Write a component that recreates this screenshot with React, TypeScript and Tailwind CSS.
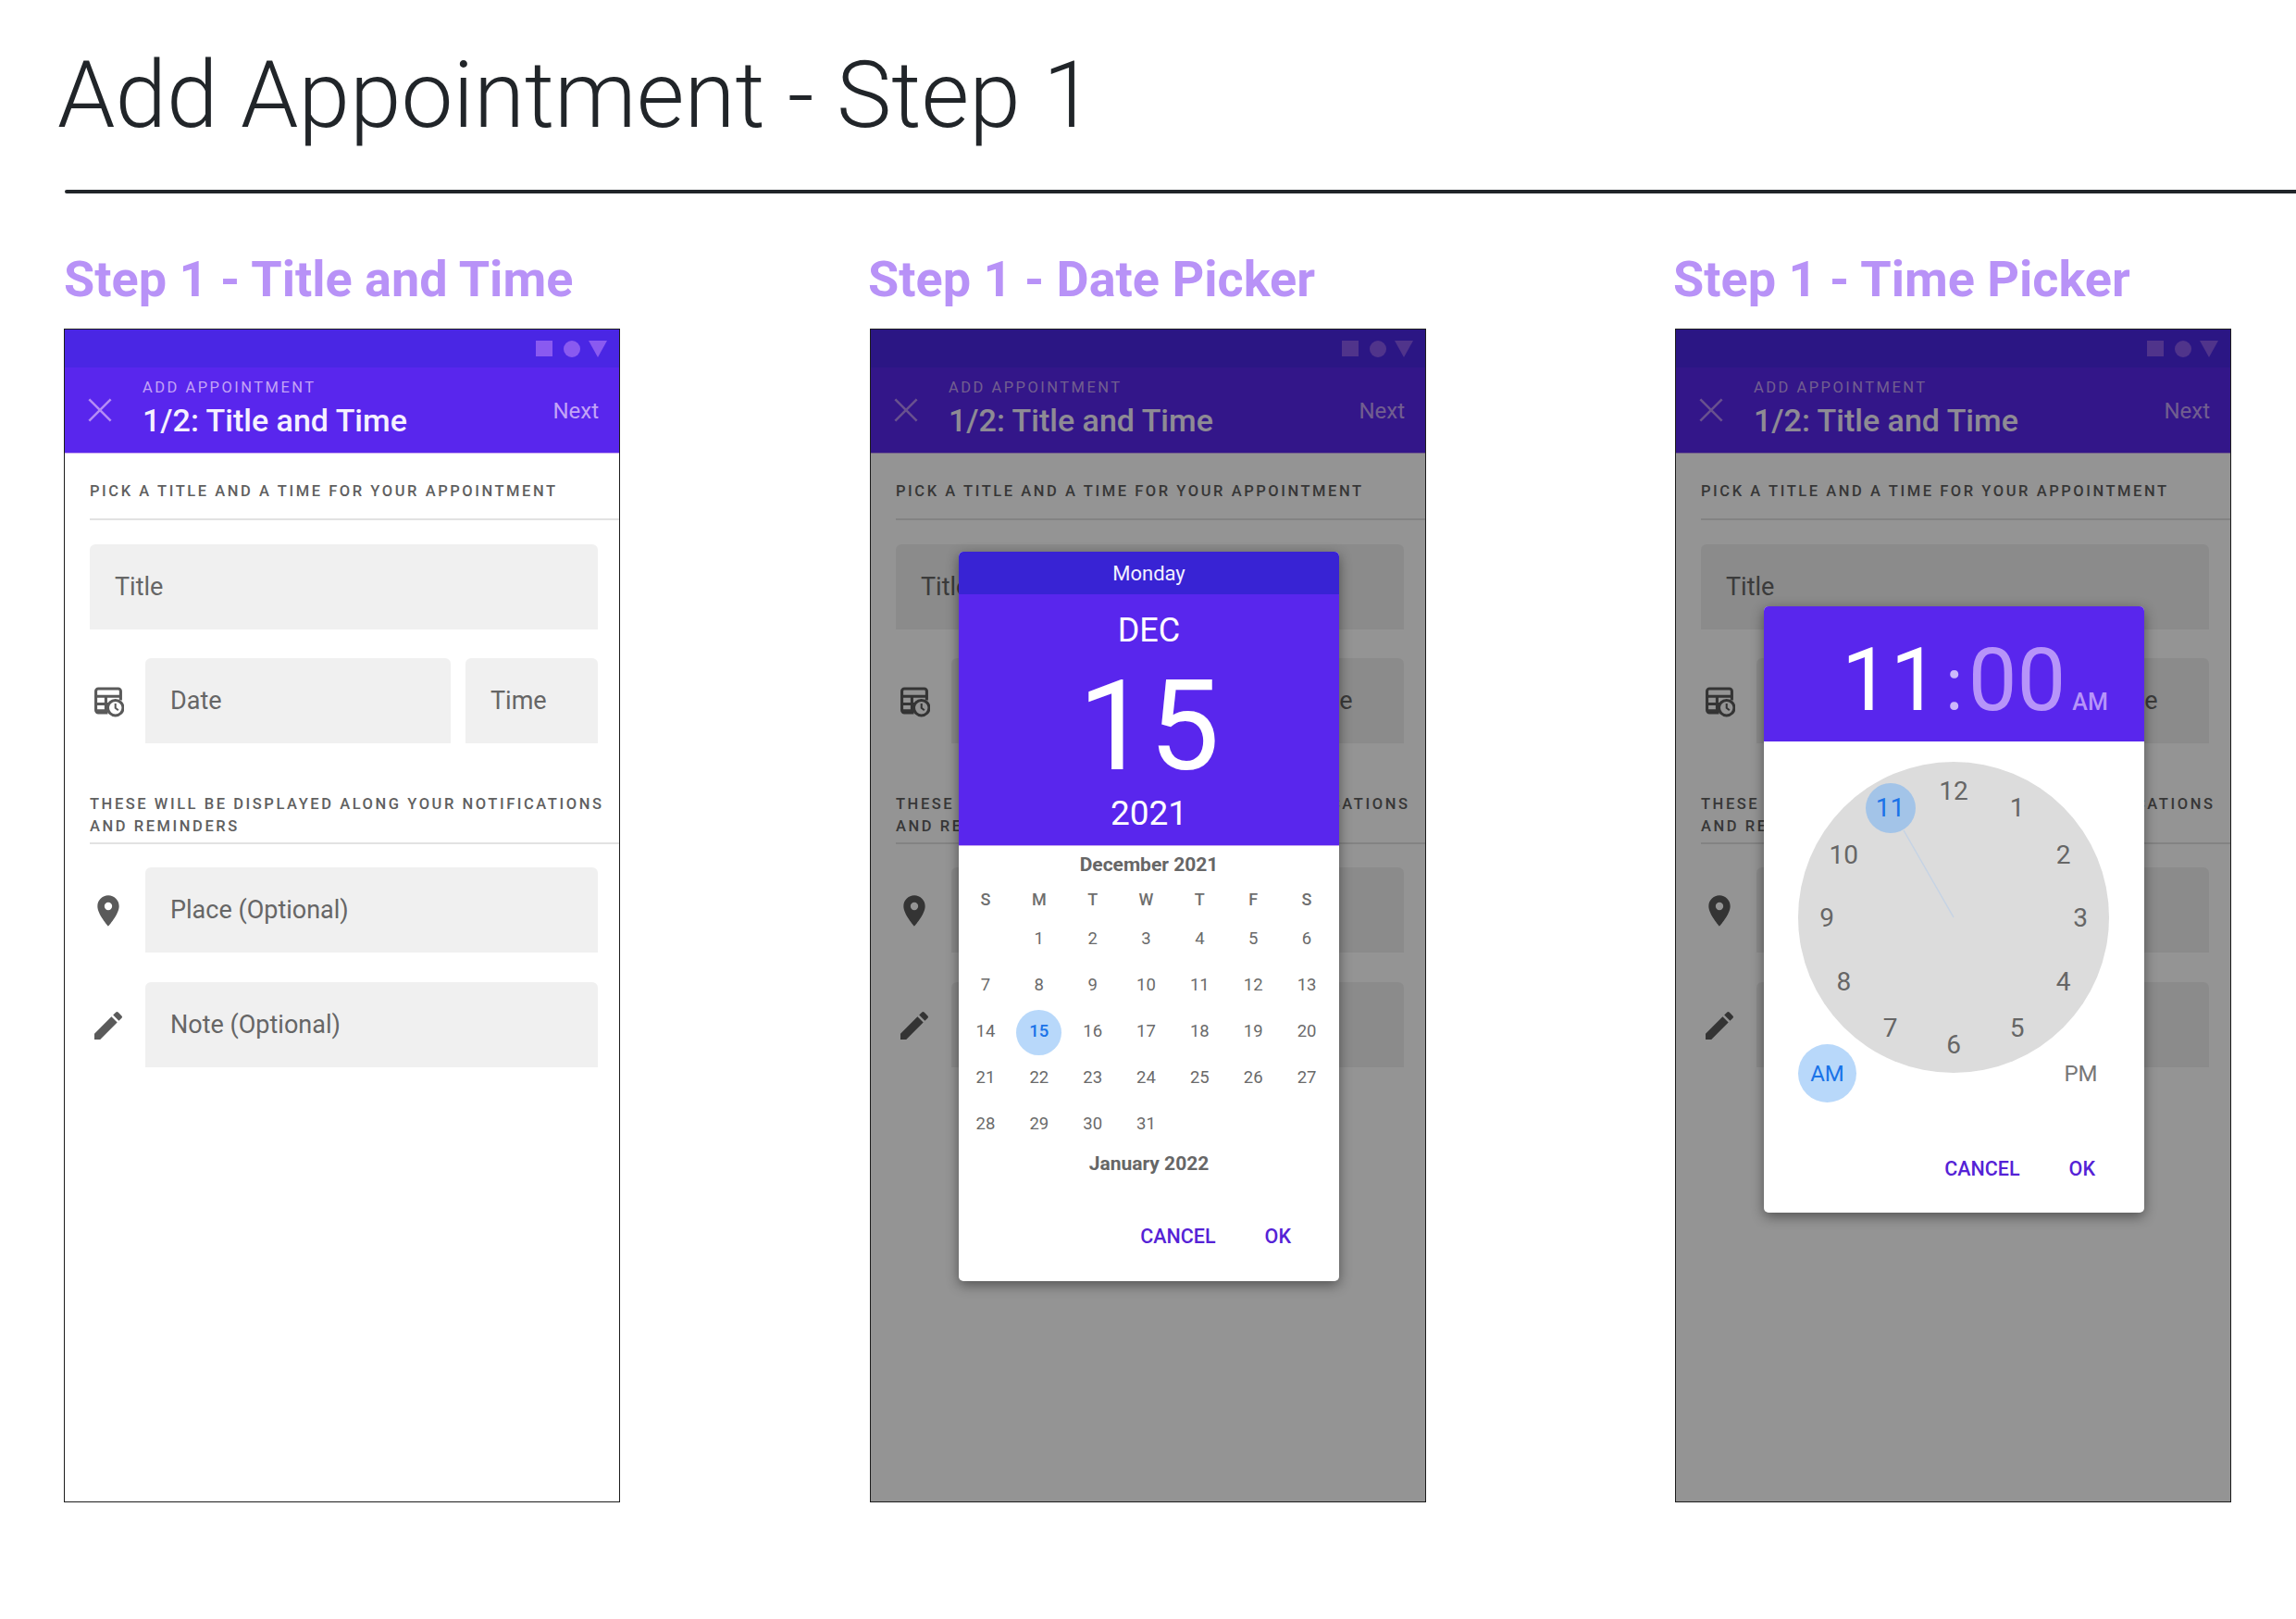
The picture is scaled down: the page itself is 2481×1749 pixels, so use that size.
import type { ReactNode } from "react";
import { MdPlace, MdEdit } from "react-icons/md";

const WEEK = ["S", "M", "T", "W", "T", "F", "S"];
const DAYS = ["", ...Array.from({ length: 31 }, (_, i) => String(i + 1))];

function TableClockIcon() {
  return (
    <svg viewBox="0 0 32 32" className="w-[33px] h-[33px]" fill="none" stroke="#5a5a5a" strokeWidth="3">
      <path d="M15 27H5a2.5 2.5 0 0 1-2.5-2.5V4.5A2.5 2.5 0 0 1 5 2h21a2.5 2.5 0 0 1 2.5 2.5V14" />
      <path d="M2.5 10h26M2.5 18h13M2.5 25h12M13 10v16" />
      <circle cx="23" cy="22" r="8" fill="#fff" />
      <path d="M23 17.5V22l3 2.5" strokeWidth="2" />
    </svg>
  );
}

function Field({ label, className }: { label: string; className: string }) {
  return (
    <div className={`h-[92px] bg-[#f0f0f0] rounded-t-[6px] flex items-center pl-[27px] pt-[1px] text-[27px] text-[#666666] ${className}`}>
      {label}
    </div>
  );
}

function SectionLabel({ children }: { children: ReactNode }) {
  return (
    <div className="text-[16.5px] leading-[24px] font-medium tracking-[0.155em] text-[#606060] uppercase">{children}</div>
  );
}

function Phone({ children }: { children?: ReactNode }) {
  return (
    <div className="relative w-[601px] h-[1268px] border border-[#1c1c1c] bg-white overflow-hidden flex flex-col">
      {/* status bar */}
      <div className="h-[41px] bg-[#4a26e4] flex items-center justify-end pr-[13px] shrink-0">
        <div className="w-[18px] h-[17px] bg-[#8a5af0]" />
        <div className="w-[18px] h-[18px] rounded-full bg-[#8a5af0] ml-[12px]" />
        <svg viewBox="0 0 20 18" className="w-[20px] h-[18px] ml-[9px]">
          <path d="M0 0h20L10 18z" fill="#8a5af0" />
        </svg>
      </div>
      {/* toolbar */}
      <div className="h-[93px] bg-[#5926ed] border-b border-[#c8a8f0] flex shrink-0 relative">
        <div className="w-[84px] pl-[24px] pt-[32px]">
          <svg viewBox="0 0 24 24" className="w-[28px] h-[28px]" stroke="#b48cf5" strokeWidth="2.2">
            <path d="M2 2l20 20M22 2L2 22" />
          </svg>
        </div>
        <div className="flex-1 pt-[12px]">
          <div className="text-[16.5px] leading-[20px] tracking-[0.15em] text-[#c3a3f7]">ADD APPOINTMENT</div>
          <div className="text-[34px] leading-[40px] mt-[5px] font-medium text-[#f5f0ff]">1/2: Title and Time</div>
        </div>
        <div className="pr-[22px] pt-[33px] text-[24px] leading-[28px] text-[#c3a3f7]">Next</div>
      </div>
      {/* form */}
      <div className="pl-[27px] flex flex-col">
        <div className="mt-[29px]">
          <SectionLabel>Pick a title and a time for your appointment</SectionLabel>
        </div>
        <div className="h-[2px] bg-[#e2e2e2] mt-[17px]" />
        <Field label="Title" className="mt-[26px] mr-[23px]" />
        <div className="flex items-center mt-[31px] mr-[23px]">
          <div className="w-[60px] pl-[4px] pt-[2px]">
            <TableClockIcon />
          </div>
          <Field label="Date" className="w-[330px]" />
          <Field label="Time" className="flex-1 ml-[16px]" />
        </div>
        <div className="mt-[54px]">
          <SectionLabel>These will be displayed along your notifications and reminders</SectionLabel>
        </div>
        <div className="h-[2px] bg-[#e2e2e2] mt-[5px]" />
        <div className="flex items-center mt-[25px] mr-[23px]">
          <div className="w-[60px] pt-[2px] text-[#5a5a5a]">
            <MdPlace className="w-[40px] h-[40px]" />
          </div>
          <Field label="Place (Optional)" className="flex-1" />
        </div>
        <div className="flex items-center mt-[32px] mr-[23px]">
          <div className="w-[60px] pt-[2px] text-[#5a5a5a]">
            <MdEdit className="w-[40px] h-[40px]" />
          </div>
          <Field label="Note (Optional)" className="flex-1" />
        </div>
      </div>
      {children}
    </div>
  );
}

function Actions({ className }: { className: string }) {
  return (
    <div className={`flex justify-end gap-[53px] text-[21.5px] leading-[28px] font-medium text-[#5522d6] ${className}`}>
      <span>CANCEL</span>
      <span>OK</span>
    </div>
  );
}

function DatePicker() {
  return (
    <div className="absolute left-[95px] top-[240px] w-[411px] h-[788px] bg-white rounded-[5px] overflow-hidden shadow-[0_4px_14px_rgba(0,0,0,0.45)]">
      <div className="h-[46px] bg-[#3823d4] flex items-center justify-center text-[22px] text-[#f2f0ff]">Monday</div>
      <div className="h-[272px] bg-[#5926ed] border-b border-[#c8a8f0] flex flex-col items-center text-white">
        <div className="mt-[17px] text-[36px] leading-[44px]">DEC</div>
        <div className="mt-[27px] text-[136px] leading-[110px]">15</div>
        <div className="mt-[17px] text-[37px] leading-[44px]">2021</div>
      </div>
      <div className="pt-[6px] text-center text-[21px] leading-[28px] font-bold text-[#666666]">December 2021</div>
      <div className="grid grid-cols-7 pr-[6px] mt-[8px] text-[18px] font-medium text-[#6e6e6e]">
        {WEEK.map((d, i) => (
          <div key={i} className="h-[30px] flex items-center justify-center">
            {d}
          </div>
        ))}
      </div>
      <div className="grid grid-cols-7 pr-[6px] mt-[4px] text-[18.5px] text-[#6a6a6a]">
        {DAYS.map((d, i) => (
          <div key={i} className="h-[50px] flex items-center justify-center">
            {d === "15" ? (
              <span className="w-[49px] h-[49px] rounded-full bg-[#b8d8fa] text-[#1a73e8] font-medium flex items-center justify-center">
                {d}
              </span>
            ) : (
              d
            )}
          </div>
        ))}
      </div>
      <div className="mt-[3px] text-center text-[21px] leading-[28px] font-bold text-[#666666]">January 2022</div>
      <Actions className="mt-[51px] pr-[52px]" />
    </div>
  );
}

function TimePicker() {
  const hours = [12, 1, 2, 3, 4, 5, 6, 7, 8, 9, 10, 11];
  return (
    <div className="absolute left-[95px] top-[299px] w-[411px] h-[655px] bg-white rounded-[5px] overflow-hidden shadow-[0_4px_14px_rgba(0,0,0,0.45)]">
      <div className="h-[146px] bg-[#5926ed] flex items-baseline pl-[84px] pt-[25px] text-[94px] leading-[110px] text-white">
        <span>11</span>
        <span className="w-[32px] text-center text-[80px] text-[#cdb8fb]">:</span>
        <span className="text-[#b794f9] -ml-[1px]">00</span>
        <span className="ml-[7px] text-[25px] leading-[28px] font-medium text-[#b794f9]">AM</span>
      </div>
      <div className="relative w-[336px] h-[336px] rounded-full bg-[#dcdcdc] mt-[22px] ml-[37px]">
        <svg viewBox="0 0 336 336" className="absolute inset-0 w-[336px] h-[336px]">
          <line x1="168" y1="168" x2="114" y2="74" stroke="#c5d3e5" strokeWidth="1.5" />
        </svg>
        {hours.map((h, i) => {
          const a = (i * Math.PI) / 6;
          const left = 168 + 137 * Math.sin(a);
          const top = 169 - 137 * Math.cos(a);
          return (
            <span
              key={h}
              style={{ left, top }}
              className={`absolute w-[54px] h-[54px] -ml-[27px] -mt-[27px] rounded-full flex items-center justify-center text-[28px] ${
                h === 11 ? "bg-[#a3c4e8] text-[#1a73e8]" : "text-[#666666]"
              }`}
            >
              {h}
            </span>
          );
        })}
      </div>
      <div className="-mt-[31px] px-[37px] flex justify-between relative text-[24px]">
        <span className="w-[63px] h-[63px] rounded-full bg-[#b8d8fa] text-[#1a73e8] flex items-center justify-center">AM</span>
        <span className="w-[63px] h-[63px] text-[#777777] flex items-center justify-center">PM</span>
      </div>
      <Actions className="mt-[58px] pr-[53px]" />
    </div>
  );
}

function Column({
  title,
  widthClass,
  headingClass,
  children,
}: {
  title: string;
  widthClass: string;
  headingClass: string;
  children?: ReactNode;
}) {
  return (
    <div className={`shrink-0 ${widthClass}`}>
      <h2 className={`text-[54px] leading-[60px] font-bold text-[#b892f7] mb-[23px] ${headingClass}`}>{title}</h2>
      <Phone>{children}</Phone>
    </div>
  );
}

export default function App() {
  return (
    <div className="w-[2481px] h-[1749px] bg-white overflow-hidden font-[Roboto,sans-serif]">
      <h1 className="pt-[43px] pl-[62px] text-[100px] leading-[120px] font-light text-[#212529]">Add Appointment - Step 1</h1>
      <div className="h-[4px] bg-[#212529] ml-[70px] mt-[42px] rounded-l-full" />
      <div className="flex pl-[69px] mt-[63px]">
        <Column title="Step 1 - Title and Time" widthClass="w-[871px]" headingClass="" />
        <Column title="Step 1 - Date Picker" widthClass="w-[870px]" headingClass="-ml-[2px]">
          <div className="absolute inset-0 bg-black/[0.42]" />
          <DatePicker />
        </Column>
        <Column title="Step 1 - Time Picker" widthClass="w-[870px]" headingClass="-ml-[2px]">
          <div className="absolute inset-0 bg-black/[0.42]" />
          <TimePicker />
        </Column>
      </div>
    </div>
  );
}
